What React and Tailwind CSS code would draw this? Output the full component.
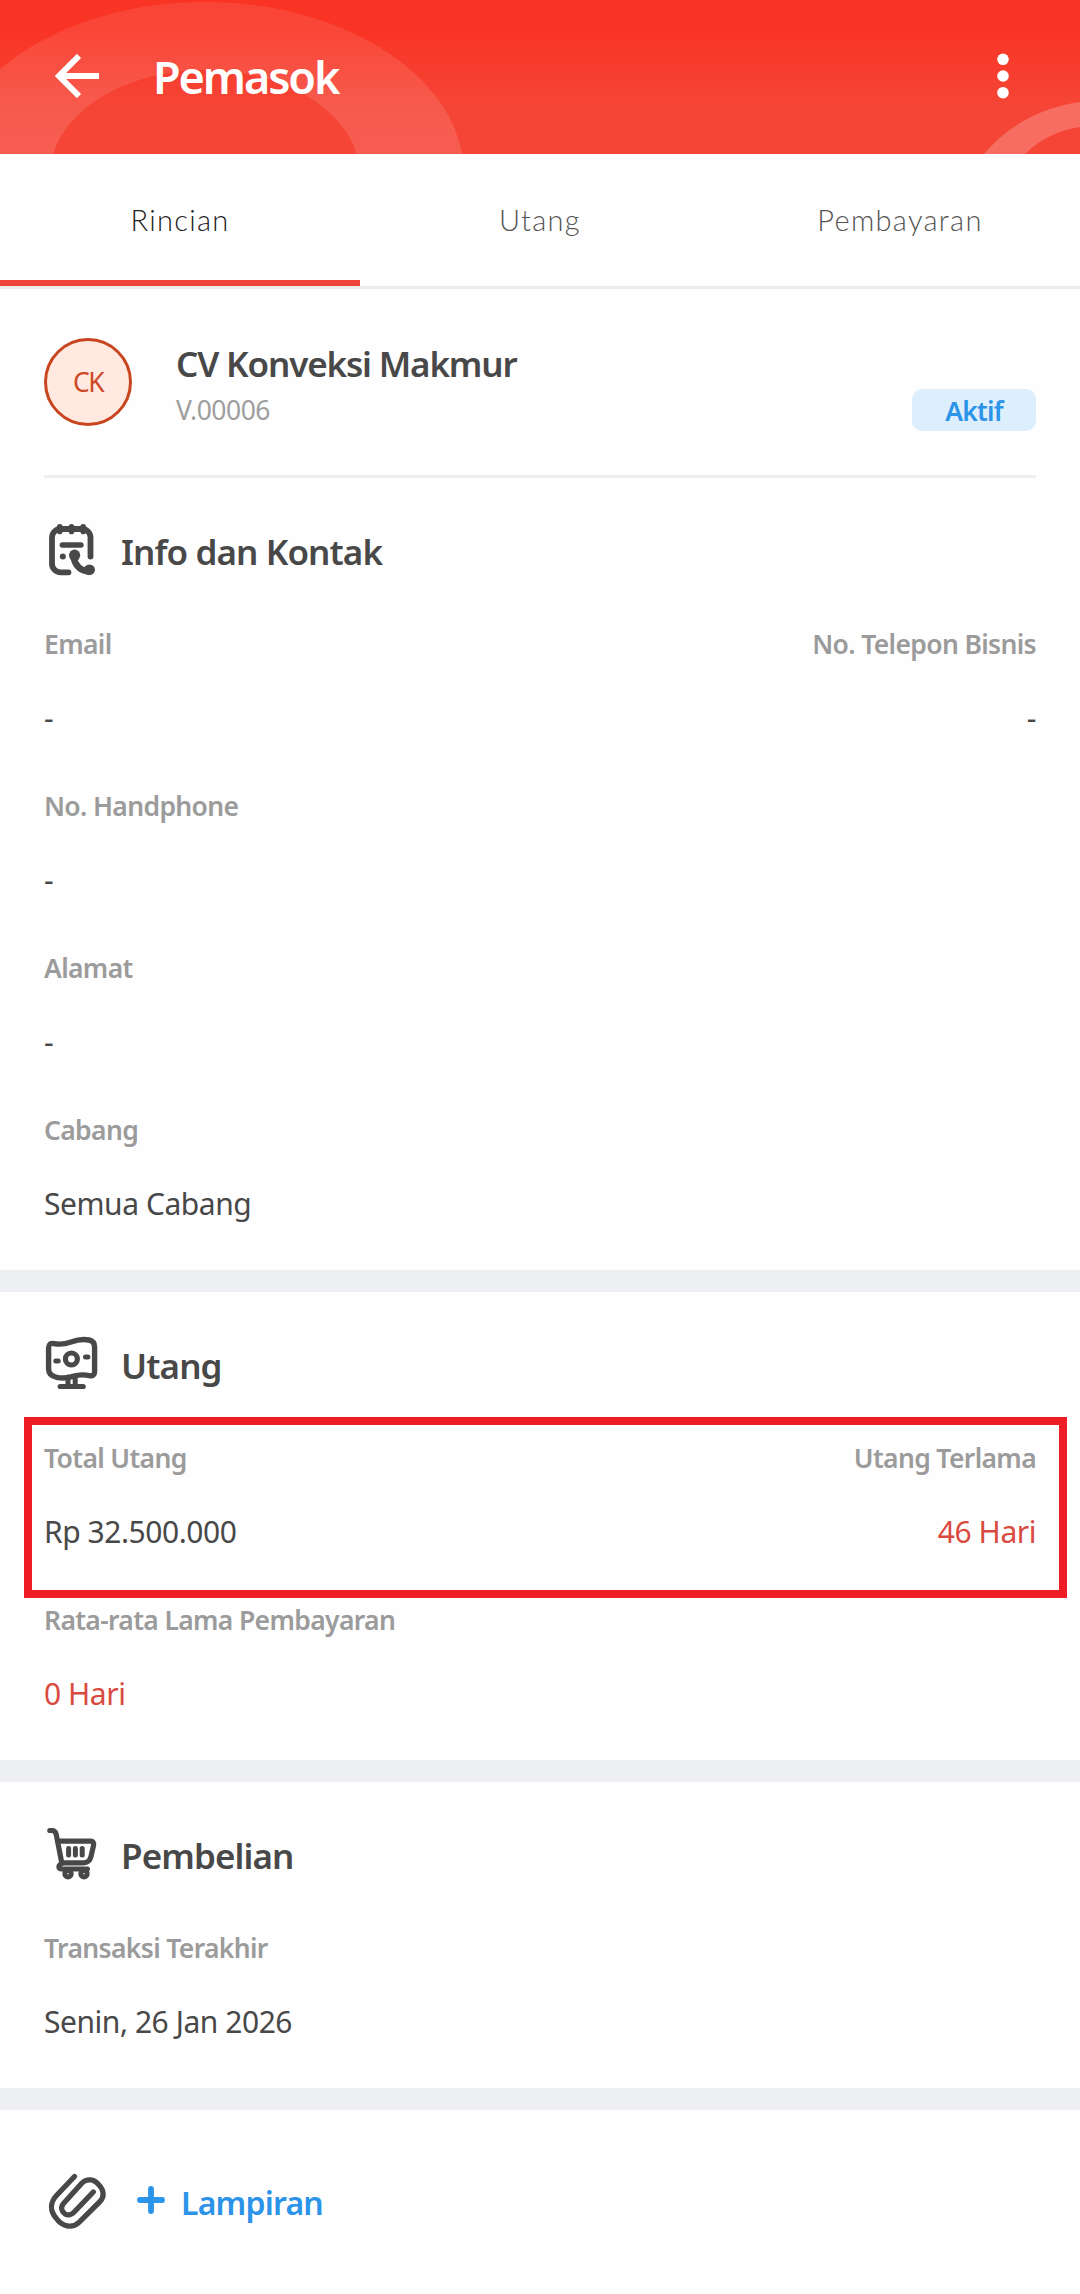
import clsx from 'clsx'

const TABS = ['Rincian', 'Utang', 'Pembayaran']

const BackIcon = () => (
    <svg viewBox="0 0 44 44" className="h-11 w-11" fill="none" stroke="#fff" strokeWidth="6">
        <path d="M44 22H5" />
        <path d="M24 2 4 22l20 20" />
    </svg>
)

const MoreIcon = () => (
    <svg viewBox="0 0 12 46" className="h-[46px] w-3" fill="#fff">
        <circle cx="6" cy="6.3" r="5.8" />
        <circle cx="6" cy="23" r="5.8" />
        <circle cx="6" cy="39.7" r="5.8" />
    </svg>
)

const ContactIcon = () => (
    <svg viewBox="14 16 56 56" className="h-14 w-14" fill="none" stroke="#484848" strokeLinecap="round">
        <path d="M38.5 67.3H30.5a8.5 8.5 0 0 1-8.5-8.5V32.5a8.5 8.5 0 0 1 8.5-8.5H52a8.5 8.5 0 0 1 8.5 8.5V51.5" strokeWidth="5.8" />
        <path d="M29.8 21.8v4.6M41.5 21.8v4.6M53.2 21.8v4.6" strokeWidth="5.6" />
        <path d="M32.3 40H51" strokeWidth="5.4" />
        <circle cx="32.8" cy="51.5" r="3" fill="#484848" stroke="none" />
        <path d="M43.5 52C45 60 50 65.5 58.5 66.5" strokeWidth="6.5" />
        <ellipse cx="44.6" cy="50.3" rx="5.6" ry="5.8" fill="#484848" stroke="none" />
        <ellipse cx="59.4" cy="64.8" rx="5.6" ry="5.2" fill="#484848" stroke="none" />
    </svg>
)

const DebtIcon = () => (
    <svg viewBox="8 10 56 56" className="h-14 w-14" fill="none" stroke="#484848" strokeLinecap="round" strokeLinejoin="round">
        <path
            d="M12.6 23c0-4 2-5 5.4-4.4 6 1.2 11 .6 17-1.6 6-2.2 12-3.4 18-2 4 1 5.6 3.4 5.6 7v24.5c0 3.5-2 5-5.2 4.2-5-1.2-10-1.4-16.4.7-6 1.9-11 2.2-16.4.9C15.5 51.2 12.6 48.5 12.6 44z"
            strokeWidth="5.4"
        />
        <circle cx="35.4" cy="34" r="6" strokeWidth="5.2" />
        <path d="M19.8 36h2.4M49.5 32h2.4" strokeWidth="5" />
        <path d="M32 52v8M39.2 51v9" strokeWidth="5" />
        <path d="M24.2 61.5H47.2" strokeWidth="5.2" />
    </svg>
)

const CartIcon = () => (
    <svg viewBox="8 7 56 56" className="h-14 w-14" fill="none" stroke="#484848" strokeLinecap="round" strokeLinejoin="round">
        <path d="M13.8 12.5h2.2c2.4 0 3.6 1.2 4.2 3.8L25.8 45" strokeWidth="5.2" />
        <path d="M22 23.2H54.5c2.6 0 3.6 1.4 3.1 4L55 38.5c-1 4.200-3.500 6.300-7.500 6.300H25.500" strokeWidth="5.200" />
        <path d="M25 46c-3 1.200-3 5 .5 5H51.500" strokeWidth="5" />
        <path d="M32.600 30.500v6.500M39.400 30.500v6.500M46.200 30.500v6.500" strokeWidth="5" />
        <circle cx="32" cy="55.800" r="3.200" strokeWidth="5" />
        <circle cx="48" cy="55.800" r="3.200" strokeWidth="5" />
    </svg>
)

const ClipIcon = () => (
    <svg viewBox="8 6 64 64" className="h-16 w-16" fill="none" stroke="#484848" strokeWidth="5.3" strokeLinecap="round" strokeLinejoin="round">
        <path d="M38.5 14.5 20.500 33.500C13.500 41 14.500 49.500 20 56 26 64.500 36 67 43 60.300L64 39.500C69 34.500 67.500 27.500 63 23 58 16.500 50.500 16.500 46 21L27.500 41.500C24 45.500 26 49.500 28.500 51.500 31 54 35.500 53 38 50.300L57.300 30" />
    </svg>
)

const PlusIcon = () => (
    <svg viewBox="0 0 28 28" className="h-7 w-7" stroke="#2b95ea" strokeWidth="5.8" strokeLinecap="round">
        <path d="M3 14h22M14 3v22" />
    </svg>
)

const Header = () => (
    <header className="relative h-[154px] overflow-hidden bg-linear-to-b from-[#f93424] from-20% to-[#f54536] to-70%">
        <svg viewBox="0 0 1080 154" className="absolute inset-0 h-full w-full">
            <defs>
                <linearGradient id="ring" x1="0" y1="0" x2="0" y2="154" gradientUnits="userSpaceOnUse">
                    <stop offset="0" stopColor="#fff" stopOpacity=".08" />
                    <stop offset="1" stopColor="#fff" stopOpacity=".13" />
                </linearGradient>
            </defs>
            <path
                fillRule="evenodd"
                fill="url(#ring)"
                d="M-54 175a259 173 0 0 1 518 0a259 173 0 0 1-518 0zM50 175a155 105 0 0 1 310 0a155 105 0 0 1-310 0z"
            />
            <path d="M984 154Q1020 111 1080 102V127Q1047 132 1025 154z" fill="#fff" fillOpacity=".22" />
        </svg>
        <div className="relative flex h-full items-center pr-[71px] pb-0.5 pl-[55px]">
            <BackIcon />
            <h1 className="ml-[54px] flex-1 pt-0.5 text-[45px] leading-[60px] font-semibold tracking-[-2.1px] text-white">Pemasok</h1>
            <MoreIcon />
        </div>
    </header>
)

const Tabs = () => (
    <nav className="grid grid-cols-3 border-b-3 border-[#ececec] font-['Lato','Open_Sans',sans-serif]">
        {TABS.map((tab, i) => (
            <div
                key={tab}
                className={clsx(
                    'flex h-[132px] items-center justify-center border-b-6 pt-[5px] text-[29px] font-light tracking-[1.3px]',
                    i === 0 ? 'border-[#ee4439] text-[#222]' : 'border-transparent text-[#555]'
                )}
            >
                {tab}
            </div>
        ))}
    </nav>
)

const Section = ({ icon, title, children }) => (
    <section className="px-11 pt-[43px] pb-[46px]">
        <div className="flex h-14 items-center">
            {icon}
            <h2 className="ml-[21px] pt-1.5 text-[35px] leading-[48px] font-semibold tracking-[-0.9px]">{title}</h2>
        </div>
        <div className="mt-[51px] space-y-[52px]">{children}</div>
    </section>
)

const Field = ({ label, value, danger, right }) => (
    <div className={clsx('space-y-[38px]', right && 'text-right')}>
        <p className="text-[26.5px] leading-8 font-semibold tracking-[-0.65px] text-[#9b9b9b]">{label}</p>
        <p className={clsx('text-[30px] leading-10 tracking-[-0.45px]', danger && 'text-[#d94a40]')}>{value}</p>
    </div>
)

const Separator = () => <div className="h-[22px] bg-[#eeeff3]" />

const App = () => {
    return (
        <div className="min-h-[2294px] bg-[#fefefe] font-['Noto_Sans','Open_Sans',sans-serif] text-[#484848]">
            <Header />
            <Tabs />

            {/* Supplier identity */}
            <div className="mx-11 flex border-b-3 border-[#eee] pt-[49px] pb-11">
                <div className="flex h-[88px] w-[88px] items-center justify-center rounded-full border-3 border-[#c9451f] bg-[#ffe9e1] pt-0.5 text-[26.5px] tracking-[-1.5px] text-[#cc4a25]">
                    CK
                </div>
                <div className="ml-11 flex-1 pt-[1.5px] pb-[1.5px]">
                    <p className="text-[35px] leading-[48px] font-semibold tracking-[-1.15px]">CV Konveksi Makmur</p>
                    <p className="mt-0.5 text-[26.5px] leading-10 tracking-[-0.5px] text-[#9e9e9e]">V.00006</p>
                </div>
                <span className="flex h-[42px] w-[124px] items-center justify-center self-end rounded-[10px] bg-[#ddeefd] pt-[3px] text-[26.5px] font-semibold tracking-[-0.8px] text-[#2b93e8]">
                    Aktif
                </span>
            </div>

            <Section icon={<ContactIcon />} title="Info dan Kontak">
                <div className="flex justify-between">
                    <Field label="Email" value="-" />
                    <Field label="No. Telepon Bisnis" value="-" right />
                </div>
                <Field label="No. Handphone" value="-" />
                <Field label="Alamat" value="-" />
                <Field label="Cabang" value="Semua Cabang" />
            </Section>

            <Separator />

            <div className="relative">
                <Section icon={<DebtIcon />} title="Utang">
                    <div className="flex justify-between">
                        <Field label="Total Utang" value="Rp 32.500.000" />
                        <Field label="Utang Terlama" value="46 Hari" danger right />
                    </div>
                    <Field label="Rata-rata Lama Pembayaran" value="0 Hari" danger />
                </Section>
                {/* Highlight frame around the first row */}
                <div className="pointer-events-none absolute top-[125px] left-6 h-[181px] w-[1043px] border-8 border-[#ee1c25]" />
            </div>

            <Separator />

            <Section icon={<CartIcon />} title="Pembelian">
                <Field label="Transaksi Terakhir" value="Senin, 26 Jan 2026" />
            </Section>

            <Separator />

            <div className="flex items-center px-11 pt-[58px]">
                <ClipIcon />
                <div className="ml-[29px] flex items-center gap-4">
                    <PlusIcon />
                    <span className="pt-1.5 text-[32px] leading-[44px] font-semibold tracking-[-0.8px] text-[#2b93e8]">Lampiran</span>
                </div>
            </div>
        </div>
    )
}

export default App
